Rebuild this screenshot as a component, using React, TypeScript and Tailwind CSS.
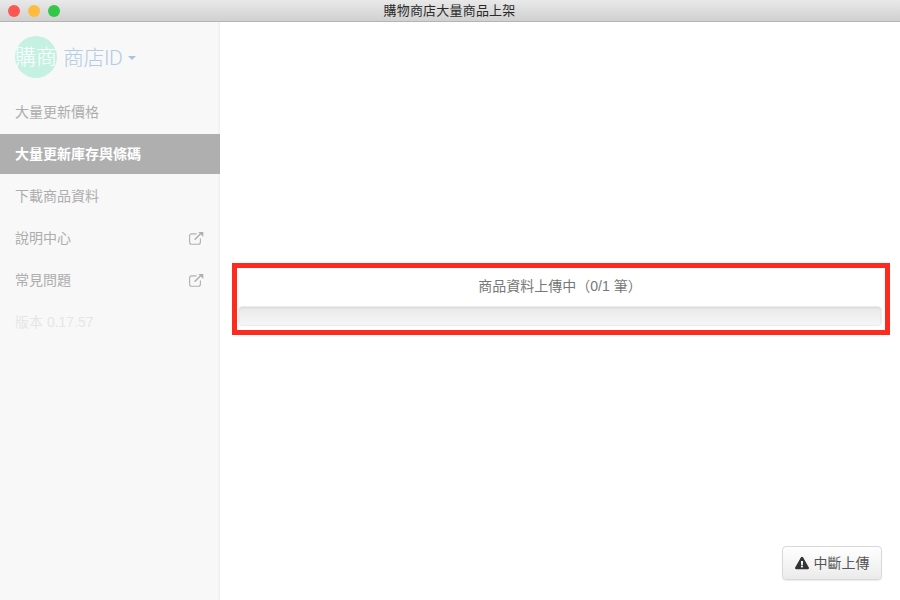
import { FaExclamationTriangle } from "react-icons/fa";

const font = { fontFamily: '"Liberation Sans", "Noto Sans CJK TC", sans-serif' };

function ExternalIcon() {
  return (
    <svg width="15" height="14" viewBox="0 0 15 14" fill="none" stroke="#b0b0b0" strokeWidth="1.1">
      <path d="M11.4 7.5v3.7a2 2 0 0 1-2 2H2.6a2 2 0 0 1-2-2V4.9a2 2 0 0 1 2-2h5" />
      <path d="M5.6 8.7 13 1.3" strokeWidth="1.6" />
      <path d="M9.3.9h5v5z" fill="#b0b0b0" stroke="none" />
    </svg>
  );
}

function MenuItem({ label, active, external }: { label: string; active?: boolean; external?: boolean }) {
  return (
    <div
      className={
        active
          ? "flex h-10 items-center bg-[#afafaf] pl-[15px] pr-4 text-sm font-bold text-white"
          : "flex h-10 items-center justify-between pl-[15px] pr-4 text-sm text-[#adadad]"
      }
    >
      <span>{label}</span>
      {external && <ExternalIcon />}
    </div>
  );
}

export default function App() {
  return (
    <div className="flex h-[600px] w-[900px] flex-col overflow-hidden bg-white" style={font}>
      <header className="relative flex h-[22px] shrink-0 items-center justify-center border-b border-[#b4b4b4] bg-gradient-to-b from-[#e9e9e9] to-[#d0d0d0] pr-px text-[13px] tracking-[0.2px] text-[#2a2a2a]">
        <div className="absolute left-2 top-[5px] flex gap-2">
          <span className="h-3 w-3 rounded-full bg-[#fc5753]" />
          <span className="h-3 w-3 rounded-full bg-[#fdbc40]" />
          <span className="h-3 w-3 rounded-full bg-[#33c748]" />
        </div>
        購物商店大量商品上架
      </header>
      <div className="flex min-h-0 flex-1">
        <aside className="flex w-[220px] shrink-0 flex-col bg-[#f8f8f8] shadow-[inset_-3px_0_3px_-2px_rgba(0,0,0,0.05)]">
          <div className="ml-[15px] mt-[14px] flex h-[42px] items-center">
            <div className="flex h-[42px] w-[42px] items-center justify-center whitespace-nowrap rounded-full bg-[#c5f1e2] text-[21px] font-light text-white">
              購商
            </div>
            <span className="ml-[6px] mt-[3px] font-['Roboto','Noto_Sans_CJK_TC',sans-serif] text-[21px] font-light tracking-[-0.5px] text-[#b3cbe3]">商店ID</span>
            <span className="ml-[6px] mt-[1px] h-0 w-0 border-x-4 border-t-4 border-x-transparent border-t-[#aac5e0]" />
          </div>
          <nav className="mt-[14px] flex flex-col gap-[2px]">
            <MenuItem label="大量更新價格" />
            <MenuItem label="大量更新庫存與條碼" active />
            <MenuItem label="下載商品資料" />
            <MenuItem label="說明中心" external />
            <MenuItem label="常見問題" external />
            <div className="flex h-10 items-center pl-[15px] text-sm text-[#e6e6e6]">版本 0.17.57</div>
          </nav>
        </aside>
        <main className="flex min-w-0 flex-1 flex-col">
          <section className="ml-3 mt-[241px] h-[72px] w-[658px] border-[5px] border-[#ff2a1f] pl-px pr-[3px]">
            <p className="mt-[5px] h-[26px] text-center text-sm leading-[26px] text-[#777]">商品資料上傳中（0/1 筆）</p>
            <div className="mt-[7px] h-5 rounded-[4px] border border-[#ececec] bg-gradient-to-b from-[#e9e9e9] to-[#f6f6f6] shadow-[inset_0_1px_2px_rgba(0,0,0,0.08)]" />
          </section>
          <button className="mb-5 mr-[18px] mt-auto flex h-[34px] w-[100px] items-center justify-center gap-[5px] self-end rounded-[4px] border border-[#d8d8d8] bg-gradient-to-b from-white to-[#ebebeb] text-sm text-[#555] shadow-[0_1px_1px_rgba(0,0,0,0.08)]">
            <FaExclamationTriangle className="text-sm text-[#333]" />
            中斷上傳
          </button>
        </main>
      </div>
    </div>
  );
}
